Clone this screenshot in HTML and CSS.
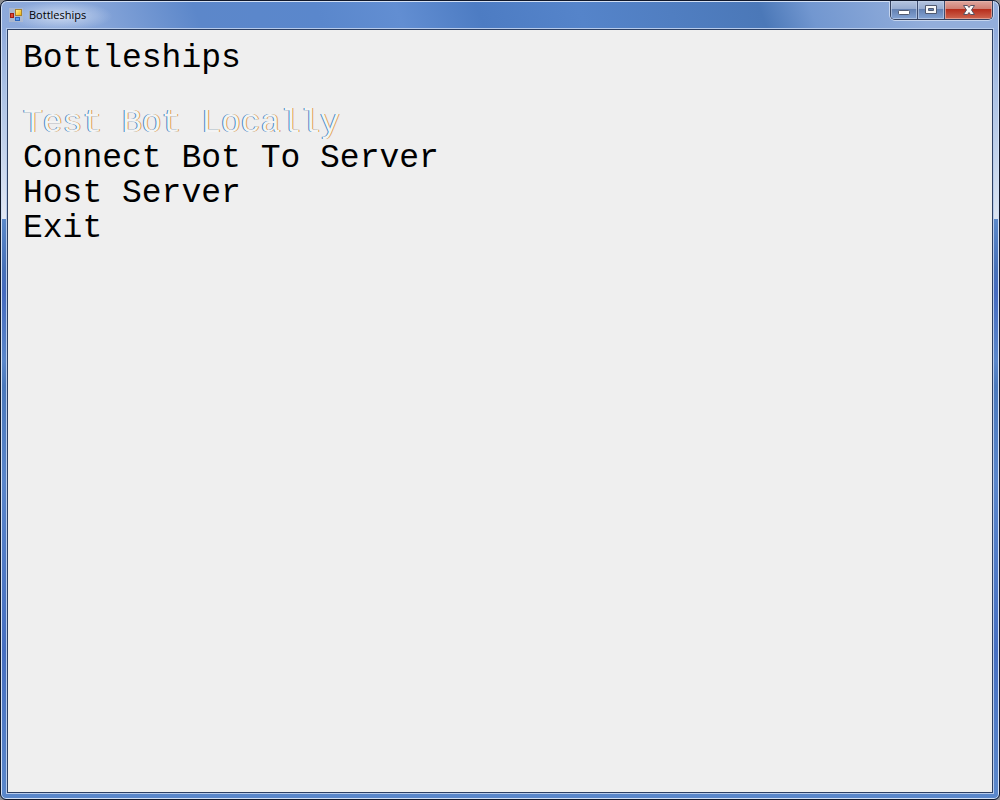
FILE: index.html
```html
<!DOCTYPE html>
<html lang="en">
<head>
<meta charset="utf-8">
<meta name="viewport" content="width=device-width, initial-scale=1">
<title>Bottleships</title>
<link rel="stylesheet" href="styles.css">
</head>
<body>
<div class="window">
  <header class="titlebar">
    <svg class="app-icon" width="14" height="14" viewBox="0 0 14 14" aria-hidden="true">
      <defs>
        <linearGradient id="gold" x2="1" y2="1"><stop stop-color="#fff3a0"/><stop offset="1" stop-color="#f0b000"/></linearGradient>
      </defs>
      <path d="M0 0h14v14H0z" fill="#b9bfca" opacity=".65"/>
      <rect x="6.500" y="1.500" width="6" height="6" fill="url(#gold)" stroke="#a8822c"/>
      <rect x="1.500" y="5.500" width="3" height="4" fill="#e04a32" stroke="#a01e16"/>
      <rect x="6.500" y="9.500" width="4" height="3" fill="#5a9cf0" stroke="#2c66bd"/>
    </svg>
    <span class="title">Bottleships</span>
    <div class="controls">
      <button class="control" type="button" aria-label="Minimize">
        <svg width="14" height="14" viewBox="0 0 14 14"><rect x="1.500" y="7.500" width="11" height="4" rx="1" fill="#fff" stroke="#515a70"/></svg>
      </button>
      <button class="control" type="button" aria-label="Maximize">
        <svg width="14" height="14" viewBox="0 0 14 14"><path d="M1.500 2.500h11v8h-11zM4.500 5.500v2h5v-2z" fill="#f7f7f8" fill-rule="evenodd" stroke="#515a70"/></svg>
      </button>
      <button class="control close" type="button" aria-label="Close">
        <svg width="14" height="14" viewBox="0 0 14 14"><path d="M1.500 2.500h4L7 4.500l1.500-2h4L9.500 7l3 4.500h-4L7 9.500l-1.500 2h-4L4.500 7z" fill="#fafafa" stroke="#5a5362"/></svg>
      </button>
    </div>
  </header>
  <main class="screen">
    <h1 class="heading">Bottleships</h1>
    <nav class="menu" aria-label="Main menu">
      <button class="item selected" type="button">Test Bot Locally</button>
      <button class="item" type="button">Connect Bot To Server</button>
      <button class="item" type="button">Host Server</button>
      <button class="item" type="button">Exit</button>
    </nav>
  </main>
</div>
</body>
</html>
```
FILE: styles.css
```css
* { box-sizing: border-box; }

body {
  margin: 0;
  background: #8b8d91;
}

.window {
  display: flex;
  flex-direction: column;
  min-height: 100vh;
  padding: 0 6px 6px;
  border: 1px solid #10182b;
  border-radius: 7px 7px 6px 6px;
  box-shadow: inset 0 0 0 1px #d3e0f4;
  background:
    linear-gradient(#8faadb, #a9c0e4 30%, #e2e8f4) 0 28px / 7px 190px no-repeat,
    linear-gradient(#8faadb, #a9c0e4 30%, #dbe4f1) 100% 28px / 7px 190px no-repeat,
    radial-gradient(ellipse at center, #dce6f6cc, #dce6f600 70%) 8px 0 / 104px 30px no-repeat,
    linear-gradient(70deg, #8eaadb 0, #86a5d9 10%, #5c87ca 20%, #5a87cc 32%, #628ed2 40%, #4d7cc3 48%, #5584ca 58%, #4b78b8 76%, #7297d0 81%, #93aedb 92%) 0 0 / 100% 29px no-repeat,
    linear-gradient(#557fc4 29px, #5b88c9 220px, #4670b8 270px, #456bc0 292px, #5b87ca 360px, #4b79bc 385px, #5a86cb 480px, #466fc1 650px, #5b88cb);
}

.titlebar {
  display: flex;
  align-items: flex-start;
  height: 28px;
  padding: 0 0 0 2px;
}

.app-icon { margin-top: 7px; }

.title {
  margin: 6px 0 0 6px;
  font: 11px/16px "Open Sans", "Noto Sans", sans-serif;
  color: #000;
}

.controls {
  display: flex;
  height: 19px;
  margin-left: auto;
  border: 1px solid #35425f;
  border-top: 0;
  border-radius: 0 0 5px 5px;
  box-shadow: 0 1px 0 #c6d5ee, 1px 0 0 #c6d5ee, -1px 0 0 #c6d5ee;
  overflow: hidden;
}

.control {
  display: flex;
  align-items: center;
  justify-content: center;
  width: 27px;
  padding: 0;
  border: 0;
  border-right: 1px solid #3c4c70;
  background: linear-gradient(#b4c4df, #96abd0 45%, #6481b2 46%, #84a4d5);
  box-shadow: inset 0 0 0 1px #c3d1e8aa;
}

.control.close {
  width: 47px;
  border-right: 0;
  background: linear-gradient(#dfa79f, #cf7e72 45%, #b62d1c 46%, #cf6751);
  box-shadow: inset 0 0 0 1px #e9b9b0aa;
}

.screen {
  flex: 1;
  padding: 11px 15px;
  border: 1px solid #2c3f62;
  outline: 1px solid #b7cbeb;
  background: #efefef;
}

.heading,
.item {
  margin: 0;
  font: 33px/35px "Courier New", "Liberation Mono", monospace;
  color: #000;
}

.heading { margin-bottom: 30px; }

.menu {
  display: flex;
  flex-direction: column;
  align-items: flex-start;
}

.item {
  padding: 0;
  border: 0;
  background: none;
  text-align: left;
}

.item.selected {
  color: #f4f4f4;
  text-shadow: -1px 0 0 #3f86c4, 1px 0 0 #dfa052;
}
```
